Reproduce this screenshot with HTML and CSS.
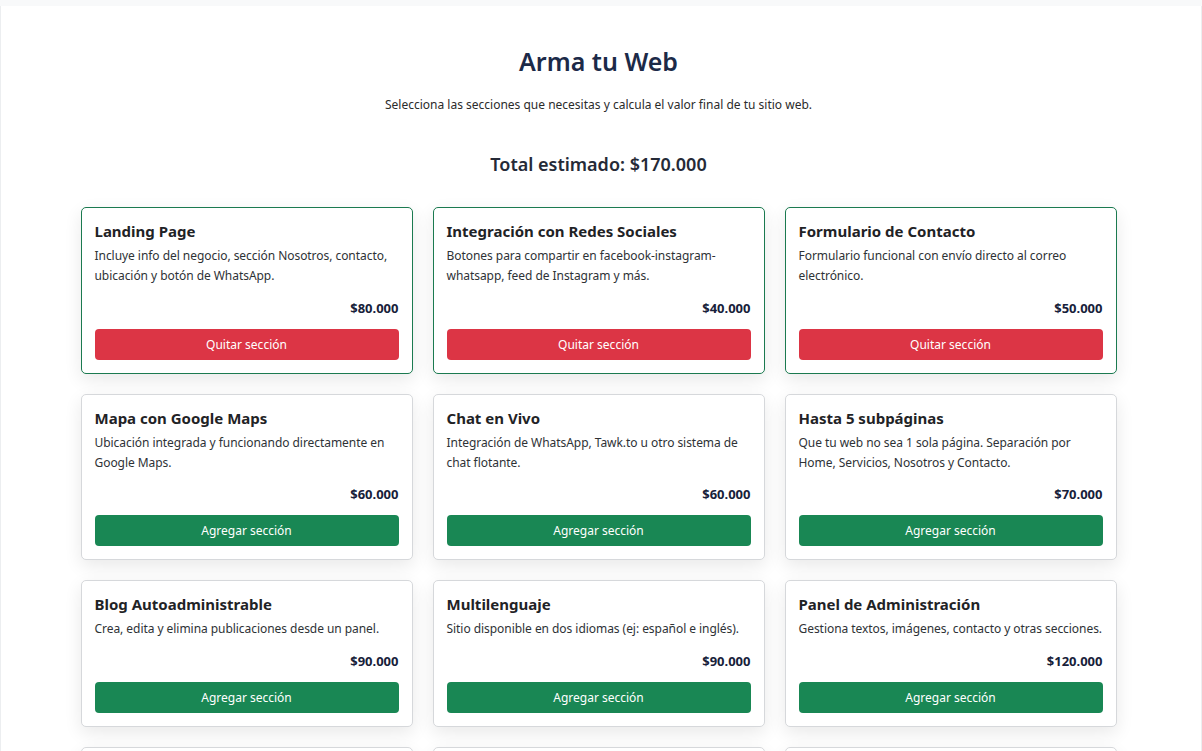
FILE: index.html
```html
<!DOCTYPE html>
<html lang="es">
<head>
<meta charset="utf-8">
<title>Arma tu Web</title>
<link rel="stylesheet" href="styles.css">
</head>
<body>
<main class="page">
  <h1 class="title">Arma tu Web</h1>
  <p class="subtitle">Selecciona las secciones que necesitas y calcula el valor final de tu sitio web.</p>
  <h2 class="total">Total estimado: $170.000</h2>
  <div class="grid">
    <div class="card selected">
      <h3 class="card-title">Landing Page</h3>
      <p class="card-desc">Incluye info del negocio, sección Nosotros, contacto, ubicación y botón de WhatsApp.</p>
      <div class="price">$80.000</div>
      <button class="btn btn-remove">Quitar sección</button>
    </div>
    <div class="card selected">
      <h3 class="card-title">Integración con Redes Sociales</h3>
      <p class="card-desc">Botones para compartir en facebook-instagram-whatsapp, feed de Instagram y más.</p>
      <div class="price">$40.000</div>
      <button class="btn btn-remove">Quitar sección</button>
    </div>
    <div class="card selected">
      <h3 class="card-title">Formulario de Contacto</h3>
      <p class="card-desc">Formulario funcional con envío directo al correo electrónico.</p>
      <div class="price">$50.000</div>
      <button class="btn btn-remove">Quitar sección</button>
    </div>
    <div class="card">
      <h3 class="card-title">Mapa con Google Maps</h3>
      <p class="card-desc">Ubicación integrada y funcionando directamente en Google Maps.</p>
      <div class="price">$60.000</div>
      <button class="btn btn-add">Agregar sección</button>
    </div>
    <div class="card">
      <h3 class="card-title">Chat en Vivo</h3>
      <p class="card-desc">Integración de WhatsApp, Tawk.to u otro sistema de chat flotante.</p>
      <div class="price">$60.000</div>
      <button class="btn btn-add">Agregar sección</button>
    </div>
    <div class="card">
      <h3 class="card-title">Hasta 5 subpáginas</h3>
      <p class="card-desc">Que tu web no sea 1 sola página. Separación por Home, Servicios, Nosotros y Contacto.</p>
      <div class="price">$70.000</div>
      <button class="btn btn-add">Agregar sección</button>
    </div>
    <div class="card">
      <h3 class="card-title">Blog Autoadministrable</h3>
      <p class="card-desc">Crea, edita y elimina publicaciones desde un panel.</p>
      <div class="price">$90.000</div>
      <button class="btn btn-add">Agregar sección</button>
    </div>
    <div class="card">
      <h3 class="card-title">Multilenguaje</h3>
      <p class="card-desc">Sitio disponible en dos idiomas (ej: español e inglés).</p>
      <div class="price">$90.000</div>
      <button class="btn btn-add">Agregar sección</button>
    </div>
    <div class="card">
      <h3 class="card-title">Panel de Administración</h3>
      <p class="card-desc">Gestiona textos, imágenes, contacto y otras secciones.</p>
      <div class="price">$120.000</div>
      <button class="btn btn-add">Agregar sección</button>
    </div>
    <div class="card">
      <h3 class="card-title">Tienda Online</h3>
      <p class="card-desc">Catálogo de productos con carrito de compras y pagos en línea.</p>
      <div class="price">$150.000</div>
      <button class="btn btn-add">Agregar sección</button>
    </div>
    <div class="card">
      <h3 class="card-title">Optimización SEO</h3>
      <p class="card-desc">Mejora el posicionamiento de tu sitio en buscadores.</p>
      <div class="price">$50.000</div>
      <button class="btn btn-add">Agregar sección</button>
    </div>
    <div class="card">
      <h3 class="card-title">Galería de Imágenes</h3>
      <p class="card-desc">Muestra fotos de tus productos o trabajos en una galería.</p>
      <div class="price">$40.000</div>
      <button class="btn btn-add">Agregar sección</button>
    </div>
  </div>
</main>
</body>
</html>
```

FILE: styles.css
```css
* {
  box-sizing: border-box;
}

html, body {
  margin: 0;
  padding: 0;
}

body {
  background: #f8f9fa;
  font-family: "Noto Sans", "Open Sans", sans-serif;
  color: #212529;
  padding-top: 6px;
}

.page {
  background: #ffffff;
  border-left: 1px solid #eceef0;
  border-right: 1px solid #eceef0;
  padding: 39px 5px 40px 0;
  min-height: 760px;
}

.title {
  margin: 0;
  text-align: center;
  font-size: 25px;
  line-height: 32px;
  font-weight: 600;
  color: #1c2a48;
}

.subtitle {
  margin: 19px 0 0;
  text-align: center;
  font-size: 12px;
  line-height: 18px;
  color: #2b2b2b;
}

.total {
  margin: 38px 0 0;
  text-align: center;
  font-size: 18px;
  line-height: 24px;
  font-weight: 600;
  color: #252a37;
}

.grid {
  width: 1036px;
  margin: 31px auto 0;
  display: grid;
  grid-template-columns: repeat(3, 1fr);
  gap: 20px;
}

.card {
  background: #ffffff;
  border: 1px solid #d6d8db;
  border-radius: 5px;
  padding: 13px;
  box-shadow: 0 6px 18px rgba(0, 0, 0, 0.09);
  display: flex;
  flex-direction: column;
}

.card.selected {
  border-color: #1b7a50;
}

.card-title {
  margin: 0;
  font-size: 15px;
  line-height: 20px;
  font-weight: 700;
  color: #1f2326;
}

.card-desc {
  margin: 5px 0 0;
  font-size: 12px;
  letter-spacing: -0.05px;
  line-height: 20px;
  color: #2e3236;
}

.price {
  margin-top: 11.5px;
  text-align: right;
  font-size: 13px;
  line-height: 20px;
  font-weight: 700;
  color: #17213a;
}

.btn {
  margin-top: 11px;
  height: 31px;
  border: none;
  border-radius: 4px;
  font-family: inherit;
  font-size: 12px;
  color: #ffffff;
  cursor: pointer;
}

.btn-remove {
  background: #dc3545;
}

.btn-add {
  background: #198754;
}
```
